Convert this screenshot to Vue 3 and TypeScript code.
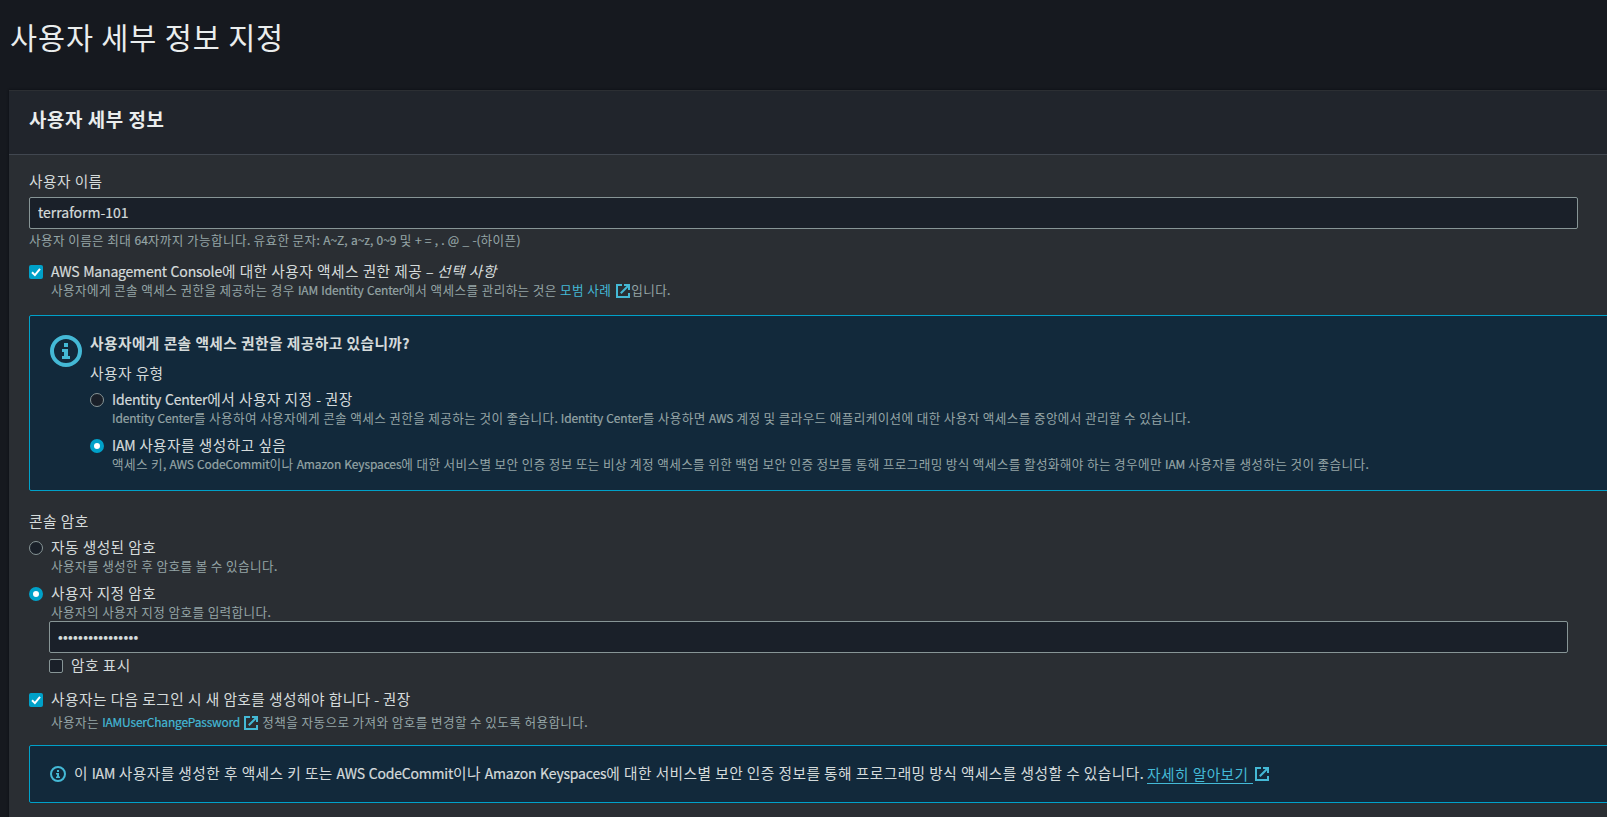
<script setup lang="ts">
import { h, ref } from 'vue'

// Splits mixed text into Hangul and Latin runs so each can carry its own tracking.
const T = (props: { s: string }) =>
  (props.s.match(/[\u1100-\u11ff\uac00-\ud7af]+|\s+|[^\s\u1100-\u11ff\uac00-\ud7af]+/g) ?? []).map((run) =>
    h('span', { class: /[A-Za-z0-9.,:?@_()~+=–-]/.test(run) ? 'run-latin' : 'run-hangul' }, run),
  )
T.props = ['s']

const ExternalIcon = () =>
  h('svg', { class: 'external-icon', viewBox: '0 0 14 14', width: 14, height: 14, 'aria-hidden': 'true' }, [
    h('path', { d: 'M6 1H1v12h12V9', fill: 'none', stroke: 'currentColor', 'stroke-width': 2 }),
    h('path', { d: 'M8 0h6v6h-2V2H8z', fill: 'currentColor' }),
    h('path', { d: 'M4.8 9.2L12.5 1.5', fill: 'none', stroke: 'currentColor', 'stroke-width': 2 }),
  ])

const userName = ref('terraform-101')
const maskedPassword = '•'.repeat(16)

const userTypes = [
  {
    label: 'Identity Center에서 사용자 지정 - 권장',
    note: 'Identity Center를 사용하여 사용자에게 콘솔 액세스 권한을 제공하는 것이 좋습니다. Identity Center를 사용하면 AWS 계정 및 클라우드 애플리케이션에 대한 사용자 액세스를 중앙에서 관리할 수 있습니다.',
    checked: false,
  },
  {
    label: 'IAM 사용자를 생성하고 싶음',
    note: '액세스 키, AWS CodeCommit이나 Amazon Keyspaces에 대한 서비스별 보안 인증 정보 또는 비상 계정 액세스를 위한 백업 보안 인증 정보를 통해 프로그래밍 방식 액세스를 활성화해야 하는 경우에만 IAM 사용자를 생성하는 것이 좋습니다.',
    checked: true,
  },
]
const passwordTypes = [
  { label: '자동 생성된 암호', note: '사용자를 생성한 후 암호를 볼 수 있습니다.', checked: false },
  { label: '사용자 지정 암호', note: '사용자의 사용자 지정 암호를 입력합니다.', checked: true },
]
</script>

<template>
  <main class="page">
    <h1 class="page-title"><T s="사용자 세부 정보 지정" /></h1>
    <section class="panel">
      <header class="panel-header"><h2><T s="사용자 세부 정보" /></h2></header>
      <div class="panel-body">
        <div class="label name-label"><T s="사용자 이름" /></div>
        <input v-model="userName" class="field" type="text" />
        <div class="hint"><T s="사용자 이름은 최대 64자까지 가능합니다. 유효한 문자: A~Z, a~z, 0~9 및 + = , . @ _ -(하이픈)" /></div>

        <div class="option console-access">
          <span class="box checked"><svg viewBox="0 0 14 14"><path d="M3 7.2l2.9 2.9L11 3.8" /></svg></span>
          <div>
            <div class="label"><T s="AWS Management Console에 대한 사용자 액세스 권한 제공 – " /><em><T s="선택 사항" /></em></div>
            <div class="note"><T s="사용자에게 콘솔 액세스 권한을 제공하는 경우 IAM Identity Center에서 액세스를 관리하는 것은 " /><a class="practice-link"><T s="모범 사례" /><ExternalIcon /></a><T s="입니다." /></div>
          </div>
        </div>

        <div class="alert alert-large">
          <svg class="info-large" viewBox="0 0 32 32">
            <circle cx="16" cy="16" r="14" fill="none" stroke="currentColor" stroke-width="4" />
            <path d="M14 8h4v4h-4zM12 14h6v7h2v3h-8v-3h2v-4h-2z" fill="currentColor" />
          </svg>
          <div class="alert-content">
            <h3><T s="사용자에게 콘솔 액세스 권한을 제공하고 있습니까?" /></h3>
            <div class="label type-label"><T s="사용자 유형" /></div>
            <div v-for="o in userTypes" :key="o.label" class="option radio-option">
              <span class="radio" :class="{ checked: o.checked }"></span>
              <div><div class="label"><T :s="o.label" /></div><div class="note"><T :s="o.note" /></div></div>
            </div>
          </div>
        </div>

        <div class="label password-label"><T s="콘솔 암호" /></div>
        <div class="password-options">
          <div v-for="o in passwordTypes" :key="o.label" class="option radio-option">
            <span class="radio" :class="{ checked: o.checked }"></span>
            <div><div class="label"><T :s="o.label" /></div><div class="note"><T :s="o.note" /></div></div>
          </div>
        </div>
        <div class="password-field-group">
          <div class="field masked">{{ maskedPassword }}</div>
          <div class="option show-password"><span class="box"></span><div class="label"><T s="암호 표시" /></div></div>
        </div>

        <div class="option reset-option">
          <span class="box checked"><svg viewBox="0 0 14 14"><path d="M3 7.2l2.9 2.9L11 3.8" /></svg></span>
          <div>
            <div class="label"><T s="사용자는 다음 로그인 시 새 암호를 생성해야 합니다 - 권장" /></div>
            <div class="note policy-note"><T s="사용자는 " /><a class="policy-link"><T s="IAMUserChangePassword" /><ExternalIcon /></a><T s=" 정책을 자동으로 가져와 암호를 변경할 수 있도록 허용합니다." /></div>
          </div>
        </div>

        <div class="alert alert-small">
          <svg class="info-small" viewBox="0 0 16 16">
            <circle cx="8" cy="8" r="7" fill="none" stroke="currentColor" stroke-width="2" />
            <path d="M7 4h2v2H7zM6 7h3v3.5h1V12H6v-1.5h1v-2H6z" fill="currentColor" />
          </svg>
          <div class="label"><T s="이 IAM 사용자를 생성한 후 액세스 키 또는 AWS CodeCommit이나 Amazon Keyspaces에 대한 서비스별 보안 인증 정보를 통해 프로그래밍 방식 액세스를 생성할 수 있습니다. " /></div>
          <a class="learn-more"><span class="learn-text"><T s="자세히 알아보기" /></span><ExternalIcon /></a>
        </div>
      </div>
    </section>
  </main>
</template>

<style>
html, body { background: #16191f; overflow: hidden; }
.run-hangul { font-size: 1.05em; letter-spacing: 0.031em; }
.run-latin { letter-spacing: -0.14px; -webkit-text-stroke: 0.2px currentColor; }
.external-icon { vertical-align: -3px; margin-left: 4px; }
</style>

<style scoped>
.page { height: 817px; overflow: hidden; box-sizing: border-box; background: #16191f; color: #d5dbdb; font-family: "Noto Sans CJK KR", "Noto Sans", sans-serif; font-size: 14px; white-space: pre; }
.page-title { margin: 0; height: 90px; padding: 15px 0 0 10px; box-sizing: border-box; font-size: 28px; font-weight: 400; line-height: 42px; color: #eaeded; }
.panel { margin-left: 9px; height: 740px; background: #2a2e33; border-top: 1px solid #2c2f33; box-sizing: border-box; box-shadow: 0 0 2px #0b0d10; }
.panel-header { height: 64px; box-sizing: border-box; padding: 14px 20px 0; background: #21252c; border-bottom: 1px solid #414750; }
.panel-header h2 { margin: 0; font-size: 18px; font-weight: 700; line-height: 28px; color: #eaeded; }
.panel-body { padding: 16px 29px 0 20px; }
.label { line-height: 18px; height: 20px; }
.label :deep(.run-latin) { letter-spacing: -0.2px; }
.name-label { line-height: 20px; }
.field { display: block; box-sizing: border-box; width: 100%; height: 32px; padding: 0 8px 2px; border: 1px solid #879596; border-radius: 2px; outline: 0; background: #1a2029; color: #d5dbdb; font: inherit; line-height: 30px; margin-top: 6px; -webkit-text-stroke: 0.2px currentColor; }
.hint, .note { font-size: 12px; color: #95a5a6; }
.hint { margin-top: 2px; height: 18px; line-height: 18px; }
.hint :deep(.run-latin) { letter-spacing: 0; }
.note { height: 17px; line-height: 15px; }
.option { display: flex; gap: 8px; }
.console-access { margin-top: 13px; }
.practice-link :deep(.external-icon) { margin: 0 1px 0 5px; }
.box, .radio { flex: none; width: 14px; height: 14px; box-sizing: border-box; margin-top: 3px; border: 1px solid #879596; border-radius: 2px; background: #1a2029; }
.radio { border-radius: 50%; }
.box.checked { border: 0; background: #00a1c9; }
.radio.checked { border: 4px solid #00a1c9; background: #fff; }
.box svg { display: block; width: 14px; height: 14px; fill: none; stroke: #fff; stroke-width: 2; }
a { color: #44b9d6; }
.alert { box-sizing: border-box; margin-right: -40px; border: 1px solid #00a1c9; border-radius: 2px; background: #12293b; display: flex; }
.alert-large { height: 176px; margin-top: 16px; padding: 18px 20px 0; }
.alert-large .note { word-spacing: -0.1px; }
.info-large { flex: none; width: 32px; height: 32px; margin: 1px 8px 0 0; color: #44b9d6; }
h3 { margin: 0; height: 20px; font-size: 14px; font-weight: 700; line-height: 18px; }
.type-label { margin: 9px 0 7px; line-height: 20px; }
.radio-option + .radio-option { margin-top: 9px; }
.password-label { margin: 21px 0 6px; }
.password-field-group { margin: 0 10px 0 20px; }
.masked { margin-top: 0; font-size: 14px; letter-spacing: 0.27px; line-height: 28px; }
.show-password { margin-top: 3px; }
.reset-option { margin-top: 14px; }
.policy-note { margin-top: 4px; }
.policy-link { margin-right: 1px; }
.policy-link :deep(.run-latin) { letter-spacing: -0.2px; }
.alert-small { height: 58px; margin-top: 14px; padding: 0 20px; align-items: center; color: #d5dbdb; word-spacing: -0.05px; }
.info-small { flex: none; width: 16px; height: 16px; margin-right: 8px; color: #44b9d6; }
.learn-more { display: flex; align-items: center; }
.learn-text { height: 19px; line-height: 17px; box-sizing: border-box; border-bottom: 1px solid #44b9d6; padding-right: 4px; }
.learn-more :deep(.external-icon) { margin-left: 2px; }
</style>
